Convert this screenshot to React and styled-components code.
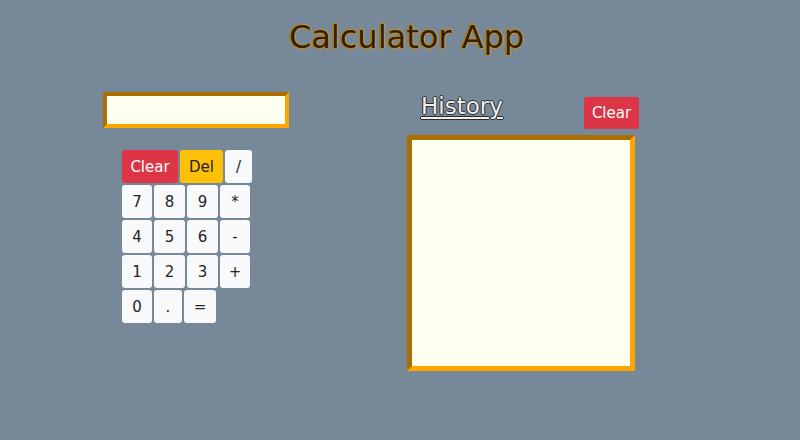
import React from 'react';
import styled, { createGlobalStyle } from 'styled-components';

const Global = createGlobalStyle`
body {
  margin: 0;
  background: #778899;
  font-family: 'DejaVu Sans', 'Noto Sans', sans-serif;
}
`
const Page = styled.div`
width: 800px;
height: 440px;
background: #778899;
`
const Title = styled.h1`
margin: 0;
padding: 16px 0 0 13px;
text-align: center;
font-size: 32px;
line-height: 42px;
font-weight: 400;
color: #2e2208;
text-shadow: 1px 0 0 #d08a10, -1px 0 0 #d08a10, 0 1px 0 #d08a10, 0 -1px 0 #d08a10;
`
const Main = styled.div`
display: flex;
padding-left: 103px;
margin-top: 34px;
`
const Left = styled.div`
width: 304px;
display: flex;
flex-direction: column;
`
const Display = styled.input`
box-sizing: border-box;
width: 186px;
height: 36px;
background: #fffff0;
border: 4px inset #ffa500;
outline: none;
`
const Keypad = styled.div`
display: flex;
flex-direction: column;
gap: 2px;
margin: 22px 0 0 19px;
`
const Row = styled.div`
display: flex;
gap: 2px;
`
const colors = {
  danger: { bg: '#dc3545', fg: '#ffffff' },
  warning: { bg: '#ffc107', fg: '#212529' },
  light: { bg: '#f8f9fa', fg: '#212529' },
};
const Key = styled.button`
box-sizing: border-box;
width: ${p => p.$w}px;
height: 33px;
padding: 0;
border: none;
border-radius: 3px;
font-family: inherit;
font-size: 15px;
background: ${p => colors[p.$kind || 'light'].bg};
color: ${p => colors[p.$kind || 'light'].fg};
`
const Right = styled.div`
width: 232px;
display: flex;
flex-direction: column;
`
const HistoryHead = styled.div`
display: flex;
justify-content: space-between;
align-items: flex-start;
padding-left: 14px;
height: 43px;
`
const HistoryTitle = styled.span`
font-size: 23px;
line-height: 28px;
color: #f0f0f0;
text-decoration: underline;
text-decoration-thickness: 2px;
text-underline-offset: 3px;
text-shadow: 1px 0 0 #2a2a2a, -1px 0 0 #2a2a2a, 0 1px 0 #2a2a2a, 0 -1px 0 #2a2a2a;
`
const ClearBtn = styled(Key)`
margin-top: 5px;
height: 32px;
font-size: 15px;
`
const HistoryBox = styled.div`
box-sizing: border-box;
width: 228px;
height: 236px;
background: #fffff0;
border: 5px inset #ffa500;
`

const keys = [
  [['Clear', 56, 'danger'], ['Del', 43, 'warning'], ['/', 27]],
  [['7', 30], ['8', 31], ['9', 31], ['*', 30]],
  [['4', 30], ['5', 31], ['6', 31], ['-', 30]],
  [['1', 30], ['2', 31], ['3', 31], ['+', 30]],
  [['0', 30], ['.', 28], ['=', 32]],
];

const App = () => {
  return (
    <Page>
      <Global />
      <Title>Calculator App</Title>
      <Main>
        <Left>
          <Display type="text" />
          <Keypad>
            {keys.map((row, i) => (
              <Row key={i}>
                {row.map(([label, w, kind]) => (
                  <Key key={label} $w={w} $kind={kind}>{label}</Key>
                ))}
              </Row>
            ))}
          </Keypad>
        </Left>
        <Right>
          <HistoryHead>
            <HistoryTitle>History</HistoryTitle>
            <ClearBtn $w={55} $kind="danger">Clear</ClearBtn>
          </HistoryHead>
          <HistoryBox />
        </Right>
      </Main>
    </Page>
  );
}

export default App;
